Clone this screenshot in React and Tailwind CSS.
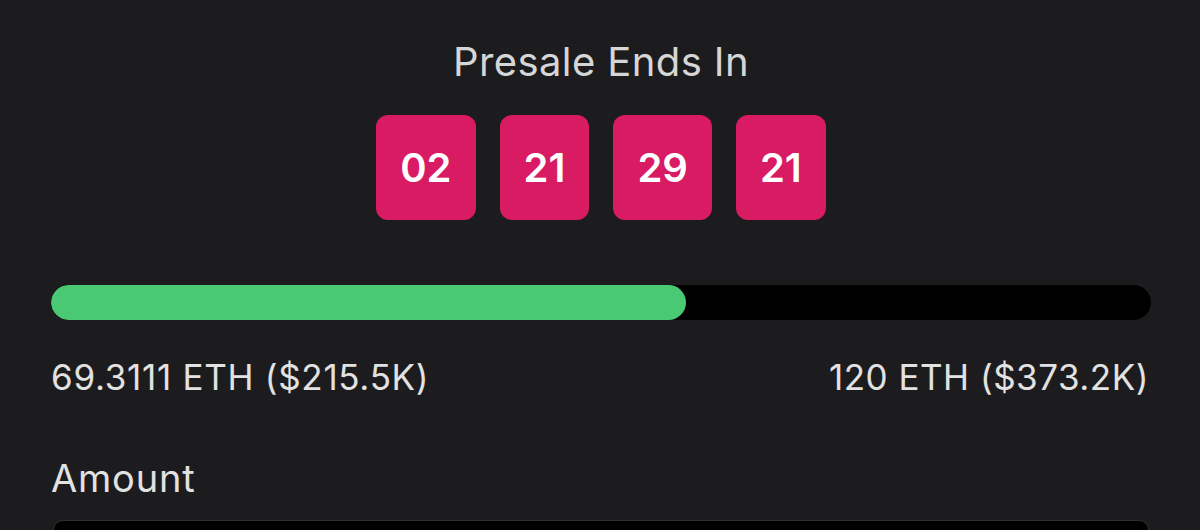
import React from 'react';

const countdown = ['02', '21', '29', '21'];

const raised = 69.3111;
const goal = 120;

export default function App() {
    const pct = (raised / goal) * 100;

    return (
        <div className="w-[1200px] h-[530px] overflow-hidden bg-[#1c1c1e] pl-[51px] pr-[49px] pt-[38px] font-['Inter',sans-serif]">
            {/* Countdown */}
            <h2 className="text-center text-[40px] leading-[48px] tracking-[0.4px] text-[#d6d6d6] font-normal">Presale Ends In</h2>
            <div className="mt-[29px] flex justify-center gap-6">
                {countdown.map((v, i) => (
                    <div
                        key={i}
                        className="h-[105px] px-[24px] flex items-center justify-center rounded-[12px] bg-[#d91b63] text-white text-[40px] font-[560]"
                    >
                        {v}
                    </div>
                ))}
            </div>

            {/* Progress */}
            <div className="mt-[65px] h-[35px] w-full rounded-full bg-black overflow-hidden">
                <div className="h-full rounded-full bg-[#4ac975]" style={{ width: `${pct}%` }} />
            </div>
            <div className="mt-[37px] pr-[2px] flex justify-between text-[35px] leading-[40px] tracking-[0.7px] text-[#e2e2e2]">
                <span>69.3111 ETH ($215.5K)</span>
                <span className="tracking-[0.5px]">120 ETH ($373.2K)</span>
            </div>

            {/* Amount input */}
            <div className="mt-[58px] text-[38px] leading-[46px] tracking-[0.8px] text-[#e2e2e2]">Amount</div>
            <div className="mt-[19px] mx-[2px] h-[80px] rounded-[10px] border border-[#2f2f31] bg-black" />
        </div>
    );
}
